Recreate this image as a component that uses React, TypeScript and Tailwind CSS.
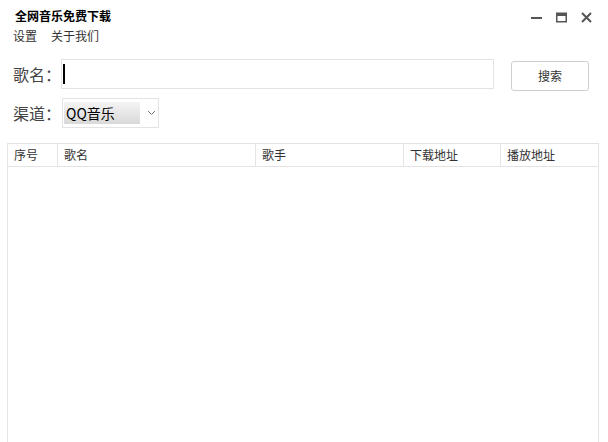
import React from 'react';

const font = { fontFamily: '"Noto Sans CJK SC", "Liberation Sans", sans-serif' };

const TitleBar = () => (
  <div className="flex items-start justify-between h-[28px] pl-[15px] pr-[16px] pt-[7px]">
    <span className="text-[12px] font-bold text-black leading-[18px]">全网音乐免费下载</span>
    <div className="flex items-center gap-[14px] pt-[5px]">
      <svg width="11" height="11" viewBox="0 0 11 11">
        <rect x="0" y="5" width="11" height="2" fill="#555" />
      </svg>
      <svg width="11" height="11" viewBox="0 0 11 11">
        <rect x="0.75" y="1.25" width="9.5" height="8.5" fill="none" stroke="#555" strokeWidth="1.5" />
        <rect x="0" y="1" width="11" height="3" fill="#555" />
      </svg>
      <svg width="11" height="11" viewBox="0 0 11 11">
        <path d="M1 1 L10 10 M10 1 L1 10" stroke="#555" strokeWidth="2" />
      </svg>
    </div>
  </div>
);

const columns = [
  { label: '序号', w: 'w-[50px]' },
  { label: '歌名', w: 'w-[198px]' },
  { label: '歌手', w: 'w-[148px]' },
  { label: '下载地址', w: 'w-[97px]' },
  { label: '播放地址', w: 'flex-1' },
];

export default function App() {
  return (
    <div className="w-[608px] h-[442px] bg-white overflow-hidden text-[#333]" style={font}>
      <TitleBar />
      <div className="flex gap-[14px] pl-[13px] text-[12px] text-[#333] leading-[16px]">
        <span>设置</span>
        <span>关于我们</span>
      </div>

      <div className="flex items-start mt-[15px] pl-[13px] h-[30px]">
        <span className="text-[16px] w-[48px] text-[#444] leading-[30px]">歌名：</span>
        <div className="w-[433px] h-[30px] border border-[#e3e3e3] flex items-center pl-[1px]">
          <div className="w-[2px] h-[20px] bg-black" />
        </div>
        <button className="ml-[17px] mt-[2px] w-[78px] h-[30px] border border-[#cfcfcf] rounded-[3px] bg-white text-[12px] text-[#333]">
          搜索
        </button>
      </div>

      <div className="flex items-center mt-[9px] pl-[13px] h-[30px]">
        <span className="text-[16px] w-[49px] text-[#444]">渠道：</span>
        <div className="w-[97px] h-[30px] border border-[#e3e3e3] flex items-center pl-[1px]">
          <div className="w-[76px] h-[22px] bg-gradient-to-b from-[#f4f4f4] to-[#d9d9d9] text-[14px] text-black leading-[22px] pl-[2px]">
            QQ音乐
          </div>
          <svg className="ml-[7px]" width="9" height="6" viewBox="0 0 9 6">
            <path d="M1 1 L4.5 4.5 L8 1" fill="none" stroke="#777" strokeWidth="1" />
          </svg>
        </div>
      </div>

      <div className="mt-[15px] ml-[7px] w-[592px] h-[320px] border border-[#e3e3e3]">
        <div className="flex h-[23px] border-b border-[#e3e3e3] text-[12px] text-[#333]">
          {columns.map((c, i) => (
            <div
              key={c.label}
              className={`${c.w} flex items-center pl-[6px] ${i < columns.length - 1 ? 'border-r border-[#e3e3e3]' : ''}`}
            >
              {c.label}
            </div>
          ))}
        </div>
      </div>
    </div>
  );
}
